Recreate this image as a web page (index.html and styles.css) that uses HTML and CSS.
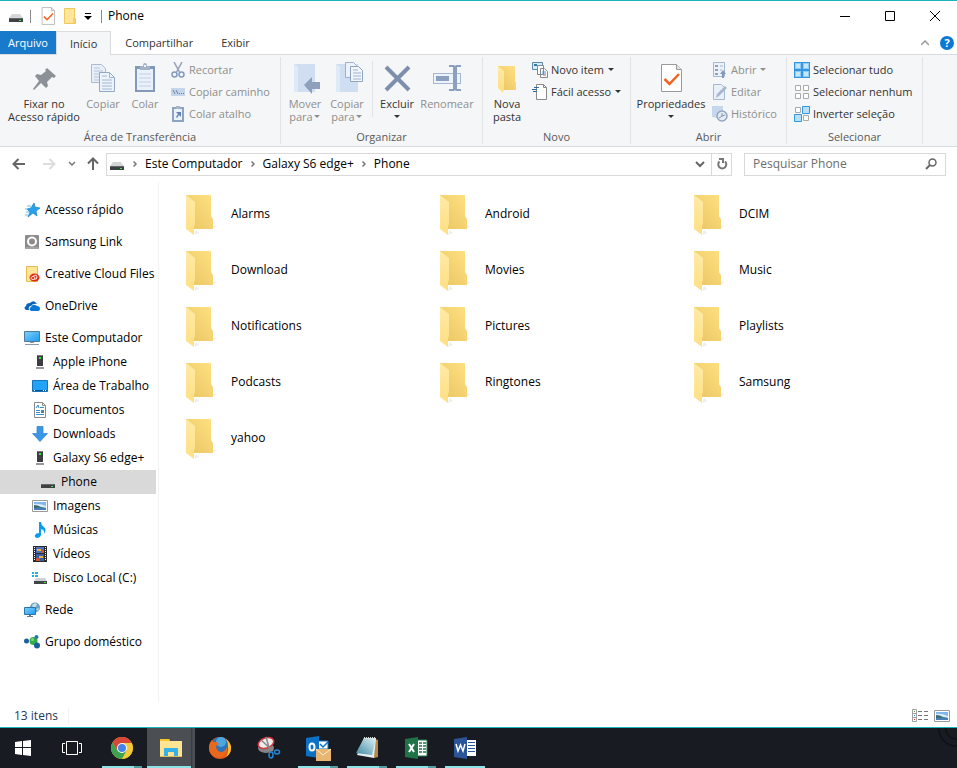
FILE: index.html
```html
<!DOCTYPE html>
<html lang="pt-BR">
<head>
    <meta charset="UTF-8">
    <meta name="viewport" content="width=device-width, initial-scale=1.0">
    <title>Phone</title>
    <link rel="stylesheet" href="styles.css">
</head>
<body>
    <!-- shared icons -->
    <svg class="defs" width="0" height="0">
        <defs>
            <linearGradient id="folder-back" x1="0" y1="1" x2="1" y2="0">
                <stop offset="0" stop-color="#e9c562"/>
                <stop offset="1" stop-color="#ffe082"/>
            </linearGradient>
            <linearGradient id="folder-front" x1="0" y1="0" x2="0" y2="1">
                <stop offset="0" stop-color="#ffeaa6"/>
                <stop offset="1" stop-color="#ffdf83"/>
            </linearGradient>
            <linearGradient id="screen" x1="0" y1="0" x2="1" y2="1">
                <stop offset="0" stop-color="#7fd0fb"/>
                <stop offset="1" stop-color="#1c9af0"/>
            </linearGradient>
            <linearGradient id="glass" x1="0" y1="1" x2="1" y2="0">
                <stop offset="0" stop-color="#3b8aa0"/>
                <stop offset="1" stop-color="#e2f2f5"/>
            </linearGradient>
            <symbol id="folder" viewBox="0 0 48 48">
                <path d="M18 45l5-2-3-3zM34 39l6-2-3-2z" fill="#eeeeee"/>
                <path d="M10 5h25v21l2 3v10H18L10 10z" fill="url(#folder-back)"/>
                <path d="M10 5l9 7v22l-1 2v9l-8-6z" fill="url(#folder-front)"/>
            </symbol>
            <symbol id="drive" viewBox="0 0 16 16">
                <path d="M4 6h8l3 4H1z" fill="#d4d6d8"/>
                <path d="M1 10h14v4H1z" fill="#3d4144"/>
                <path d="M1 10h14v1H1z" fill="#63686b"/>
                <path d="M11 12h2v1h-2z" fill="#3cea3c"/>
            </symbol>
            <symbol id="tower" viewBox="0 0 16 16">
                <path d="M5 1h6v11H5z" fill="#3b3d40"/>
                <path d="M5 1h6v1H5z" fill="#777"/>
                <path d="M7 3h2v2H7z" fill="#35e835"/>
                <path d="M4 13h8v2H4z" fill="#97999b"/>
            </symbol>
            <symbol id="check-doc" viewBox="0 0 32 32">
                <path d="M6.500 2.500h15l5 5v22h-20z" fill="#fff" stroke="#9a9a9a"/>
                <path d="M21.500 2.500v5h5" fill="#e4e4e4" stroke="#9a9a9a"/>
                <path d="M9.500 17l5 5L24 12" fill="none" stroke="#f4631e" stroke-width="2.500"/>
            </symbol>
            <symbol id="picture" viewBox="0 0 16 16">
                <path d="M.5 2.500h15v11H.5z" fill="#fff" stroke="#9a9a9a"/>
                <path d="M2 4h12v8H2z" fill="#7fb6ee"/>
                <path d="M2 6q5-1 12 2v2H2z" fill="#d8ecf8"/>
                <path d="M2 7q4 0 7 2l5 1v2H2z" fill="#386a70"/>
                <path d="M2 10q6-1 12 0v2H2z" fill="#477eb3"/>
            </symbol>
            <symbol id="arrow-down" viewBox="0 0 8 8">
                <path d="M1 2h6L4 5z" fill="currentColor"/>
            </symbol>
            <symbol id="chevron" viewBox="0 0 8 8">
                <path d="M2.500 1.500L5 4 2.500 6.500" fill="none" stroke="#777" stroke-width="1.500"/>
            </symbol>
        </defs>
    </svg>

    <header class="title-bar">
        <svg class="icon-16"><use href="#drive"/></svg>
        <span class="title-sep"></span>
        <button class="quick-button" aria-label="Propriedades">
            <svg width="20" height="20"><use href="#check-doc"/></svg>
        </button>
        <button class="quick-button" aria-label="Nova pasta">
            <svg width="16" height="16" viewBox="0 0 16 16"><path d="M2.500.5h10v9l1 1v5h-11z" fill="#ffe69a" stroke="#f0c95a"/><path d="M12 10v5" stroke="#e9bd45"/></svg>
        </button>
        <button class="quick-button quick-more" aria-label="Personalizar">
            <svg width="8" height="8" viewBox="0 0 8 8"><path d="M1 1h6v1H1zM0 4h8L4 8z" fill="#000"/></svg>
        </button>
        <span class="title-sep"></span>
        <h1>Phone</h1>
        <div class="window-controls">
            <button aria-label="Minimizar"><svg width="10" height="10" viewBox="0 0 10 10"><path d="M0 5.500h10" stroke="#000"/></svg></button>
            <button aria-label="Maximizar"><svg width="10" height="10" viewBox="0 0 10 10"><path d="M.5.5h9v9h-9z" fill="none" stroke="#000"/></svg></button>
            <button aria-label="Fechar"><svg width="10" height="10" viewBox="0 0 10 10"><path d="M0 0l10 10M10 0L0 10" stroke="#000"/></svg></button>
        </div>
    </header>

    <nav class="tabs">
        <button class="tab tab-file">Arquivo</button>
        <button class="tab tab-active">Início</button>
        <button class="tab">Compartilhar</button>
        <button class="tab">Exibir</button>
        <div class="tabs-right">
            <button aria-label="Recolher"><svg width="8" height="6" viewBox="0 0 8 6"><path d="M0 5l4-4 4 4" fill="none" stroke="#999" stroke-width="1.500"/></svg></button>
            <button class="help-button" aria-label="Ajuda">?</button>
        </div>
    </nav>

    <section class="ribbon">
        <div class="group group-clipboard">
            <div class="group-tools">
                <button class="tool tool-pin">
                    <svg class="icon-32" viewBox="0 0 32 32"><path d="M19 6l9 8-2 2-2-1-5 5 1 4-2 2-5-5-7 7-1-1 6-8-4-5 2-2 4 1 5-4-1-1z" fill="#8b9197"/></svg>
                    <span>Fixar no<br>Acesso rápido</span>
                </button>
                <button class="tool tool-copy" disabled>
                    <svg class="icon-32" viewBox="0 0 32 32"><path d="M4.500 2.500h10l4 4v14h-14z" fill="#e8eff8" stroke="#a9bbd4"/><path d="M7 6h6M7 9h9M7 12h9M7 15h9M7 18h9" stroke="#b5c5da"/><path d="M12.500 10.500h10l5 5v14h-15z" fill="#edf3fa" stroke="#92a8c6"/><path d="M22.500 10.500v5h5M15 14h5M15 18h10M15 21h10M15 24h10M15 27h10" fill="none" stroke="#a4b7d0"/></svg>
                    <span>Copiar</span>
                </button>
                <button class="tool tool-copy" disabled>
                    <svg class="icon-32" viewBox="0 0 32 32"><path d="M6 4h20v26H6z" fill="#8499ba"/><path d="M8 7h16v21H8z" fill="#e9f1fa"/><path d="M10 12h12M10 16h12M10 20h12M10 24h12" stroke="#c1d0e3"/><path d="M11 4h3q0-3 2-3t2 3h3v4H11z" fill="#a4b2c6"/><path d="M15 3h2v2h-2z" fill="#f0f4fa"/></svg>
                    <span>Colar</span>
                </button>
                <div class="tool-list">
                    <button disabled><svg class="icon-16" viewBox="0 0 16 16"><path d="M4 0l6 11M12 0L6 11" stroke="#91a0b6" stroke-width="1.500"/><circle cx="4.500" cy="12.500" r="2.500" fill="none" stroke="#829bbe" stroke-width="1.500"/><circle cx="11.500" cy="12.500" r="2.500" fill="none" stroke="#829bbe" stroke-width="1.500"/></svg>Recortar</button>
                    <button disabled><svg class="icon-16" viewBox="0 0 16 16"><path d="M1 4h14v8H1z" fill="#c5d6eb"/><path d="M3 6l2 4M6 6l2 4M9 9.500h1M11 9.500h1M13 9.500h1" stroke="#6b82a7"/></svg>Copiar caminho</button>
                    <button disabled><svg class="icon-16" viewBox="0 0 16 16"><path d="M2 1h12v15H2z" fill="#8da3c3"/><path d="M4 3h8v11H4z" fill="#e9f1fa"/><path d="M6 0h4v3H6z" fill="#a8b4c6"/><path d="M6 6h5v5l-2-2-2 3-1-1 2-3z" fill="#6482b4"/></svg>Colar atalho</button>
                </div>
            </div>
            <div class="group-name">Área de Transferência</div>
        </div>

        <div class="group group-organize">
            <div class="group-tools">
                <button class="tool tool-copy" disabled>
                    <svg class="icon-32" viewBox="0 0 32 32"><path d="M5 2h21v28H5z" fill="#cfdff1"/><path d="M5 2l4 3v25H5z" fill="#dfeaf7"/><path d="M15 23l8-8v5h8v7h-8v5z" fill="#8ea0bc"/></svg>
                    <span>Mover<br>para<svg class="icon-8"><use href="#arrow-down"/></svg></span>
                </button>
                <button class="tool tool-copy" disabled>
                    <svg class="icon-32" viewBox="0 0 32 32"><path d="M5 2h22v28H5z" fill="#cfdff1"/><path d="M5 2l4 3v25H5z" fill="#dfeaf7"/><path d="M14.500.5h8l3 3v12h-11z" fill="#edf3fb" stroke="#9db1cc"/><path d="M19.500 4.500h8l4 4v11h-12z" fill="#f2f6fc" stroke="#8fa5c4"/><path d="M22 8h5M22 11h8M22 14h8M22 17h8" stroke="#9fb3cf"/></svg>
                    <span>Copiar<br>para<svg class="icon-8"><use href="#arrow-down"/></svg></span>
                </button>
                <span class="tool-sep"></span>
                <button class="tool tool-copy">
                    <svg class="icon-32" viewBox="0 0 32 32"><path d="M5 5l23 23M28 5L5 28" stroke="#7d8fad" stroke-width="4"/></svg>
                    <span>Excluir<br><svg class="icon-8"><use href="#arrow-down"/></svg></span>
                </button>
                <button class="tool tool-rename" disabled>
                    <svg class="icon-32" viewBox="0 0 32 32"><path d="M2 11h28v11H2z" fill="#a7b7cf"/><path d="M3 12h26v9H3z" fill="#edf3fb"/><path d="M5 14h13v5H5z" fill="#8ba0c0"/><path d="M18 3h5l1 1 1-1h5v2h-4v22h4v2h-5l-1-1-1 1h-5v-2h4V5h-4z" fill="#8b9fbe"/></svg>
                    <span>Renomear</span>
                </button>
            </div>
            <div class="group-name">Organizar</div>
        </div>

        <div class="group group-new">
            <div class="group-tools">
                <button class="tool tool-copy">
                    <svg class="icon-32" viewBox="0 0 32 32"><path d="M7 4h17v15l1 2v7H12z" fill="url(#folder-back)"/><path d="M7 4l6 5v17l-1 5-5-5z" fill="url(#folder-front)"/></svg>
                    <span>Nova<br>pasta</span>
                </button>
                <div class="tool-list">
                    <button><svg class="icon-16" viewBox="0 0 16 16"><path d="M.5.500h10v7H.5z" fill="#d8ecfa" stroke="#5b88a8"/><path d="M2 2h3v2H2z" fill="#3478a8"/><path d="M5.500 3.500h6v9h-6zM8.500 6.500h4l3 3v6h-7z" fill="#fff" stroke="#888"/><path d="M10 10h4M10 12h4" stroke="#4f94cd"/><path d="M11 13h3" stroke="#e07b6b"/></svg>Novo item<svg class="icon-8"><use href="#arrow-down"/></svg></button>
                    <button><svg class="icon-16" viewBox="0 0 16 16"><path d="M4.500.5h7l3 3v12h-10z" fill="#fff" stroke="#8a8a8a"/><path d="M11.500.5v3h3" fill="none" stroke="#8a8a8a"/><path d="M2 3.500h5M0 5.500h5M1 7.500h4" stroke="#2c6ca4"/></svg>Fácil acesso<svg class="icon-8"><use href="#arrow-down"/></svg></button>
                </div>
            </div>
            <div class="group-name">Novo</div>
        </div>

        <div class="group group-open">
            <div class="group-tools">
                <button class="tool tool-props">
                    <svg class="icon-32"><use href="#check-doc"/></svg>
                    <span>Propriedades<br><svg class="icon-8"><use href="#arrow-down"/></svg></span>
                </button>
                <div class="tool-list">
                    <button disabled><svg class="icon-16" viewBox="0 0 16 16"><path d="M1.500.5h11v14h-11z" fill="#edf2f9" stroke="#a5b8d2"/><path d="M3 3h3v2H3zM3 7h3v2H3zM3 11h3v2H3z" fill="#8ca2c2"/><path d="M8 4h3M8 8h2" stroke="#a5b8d2"/><path d="M10 16v-4H8l3-4 3 4h-2v4z" fill="#8499b9"/></svg>Abrir<svg class="icon-8"><use href="#arrow-down"/></svg></button>
                    <button disabled><svg class="icon-16" viewBox="0 0 16 16"><path d="M1.500.5h8l3 3v12h-11z" fill="#e8f0f9" stroke="#a5b8d2"/><path d="M4 14l1-4 8-8 2 2-8 8z" fill="#a5b6ce"/></svg>Editar</button>
                    <button disabled><svg class="icon-16" viewBox="0 0 16 16"><path d="M0 0h11v13L0 11z" fill="#c6d7ec"/><circle cx="10" cy="10" r="5" fill="#e4ebf4" stroke="#93a6c0" stroke-width="1.500"/><path d="M10 7v3l3-1M7 12l3-2" fill="none" stroke="#8294ae"/></svg>Histórico</button>
                </div>
            </div>
            <div class="group-name">Abrir</div>
        </div>

        <div class="group group-select">
            <div class="group-tools">
                <div class="tool-list">
                    <button><svg class="icon-16" viewBox="0 0 16 16"><path d="M0 0h16v16H0z" fill="#3496e0"/><path d="M1 1h6v6H1zM9 1h6v6H9zM1 9h6v6H1zM9 9h6v6H9z" fill="#8fcbf7"/><path d="M2 2h4v4H2zM10 2h4v4h-4zM2 10h4v4H2zM10 10h4v4h-4z" fill="#c6e6fc"/></svg>Selecionar tudo</button>
                    <button><svg class="icon-16" viewBox="0 0 16 16"><path d="M1.500 1.500h5v5h-5zM9.500 1.500h5v5h-5zM1.500 9.500h5v5h-5zM9.500 9.500h5v5h-5z" fill="#fff" stroke="#aaa"/></svg>Selecionar nenhum</button>
                    <button><svg class="icon-16" viewBox="0 0 16 16"><path d="M1.500 1.500h5v5h-5zM9.500 9.500h5v5h-5z" fill="#fff" stroke="#aaa"/><path d="M8.500.5h7v7h-7zM.5 8.500h7v7h-7z" fill="#b6e0fd" stroke="#3496e0"/></svg>Inverter seleção</button>
                </div>
            </div>
            <div class="group-name">Selecionar</div>
        </div>
    </section>

    <div class="address-row">
        <button class="nav-button" aria-label="Voltar"><svg width="14" height="12" viewBox="0 0 14 12"><path d="M13 6H2M6.500 1L1.500 6l5 5" fill="none" stroke="#666" stroke-width="2"/></svg></button>
        <button class="nav-button" aria-label="Avançar" disabled><svg width="14" height="12" viewBox="0 0 14 12"><path d="M1 6h11M7.500 1l5 5-5 5" fill="none" stroke="#ddd" stroke-width="2"/></svg></button>
        <button class="nav-button nav-small" aria-label="Locais recentes"><svg width="8" height="6" viewBox="0 0 8 6"><path d="M1 1l3 3 3-3" fill="none" stroke="#777" stroke-width="1.500"/></svg></button>
        <button class="nav-button nav-up" aria-label="Acima"><svg width="12" height="14" viewBox="0 0 12 14"><path d="M6 13V2M1 6.500l5-5 5 5" fill="none" stroke="#666" stroke-width="2"/></svg></button>
        <div class="address-bar">
            <svg class="icon-16"><use href="#drive"/></svg>
            <svg class="icon-8"><use href="#chevron"/></svg>
            <a href="#">Este Computador</a>
            <svg class="icon-8"><use href="#chevron"/></svg>
            <a href="#">Galaxy S6 edge+</a>
            <svg class="icon-8"><use href="#chevron"/></svg>
            <a href="#">Phone</a>
            <button class="address-drop" aria-label="Locais anteriores"><svg width="10" height="7" viewBox="0 0 10 7"><path d="M1 1l4 4 4-4" fill="none" stroke="#666" stroke-width="2"/></svg></button>
            <button class="address-refresh" aria-label="Atualizar"><svg width="12" height="12" viewBox="0 0 12 12"><path d="M9 3.500a4 4 0 1 1-5.500 0" fill="none" stroke="#777" stroke-width="2"/><path d="M3 0h5v5H6V2H3z" fill="#777"/></svg></button>
        </div>
        <form class="search">
            <input type="text" placeholder="Pesquisar Phone" aria-label="Pesquisar Phone">
            <button type="button" aria-label="Pesquisar"><svg width="12" height="12" viewBox="0 0 12 12"><circle cx="7.500" cy="4.500" r="3.500" fill="none" stroke="#666" stroke-width="1.500"/><path d="M5 7l-4 4" stroke="#666" stroke-width="2"/></svg></button>
        </form>
    </div>

    <div class="content">
        <aside class="sidebar">
            <a class="root" href="#"><svg class="icon-16" viewBox="0 0 16 16"><path d="M10 1l1 4 5 1-4 3 1 5-4-3-5 4 2-5-3-3 4-1z" fill="#29a1ec" stroke="#1580c8" stroke-width=".7"/><path d="M3 4h4M1 7h3M2 10h3M1 13h3" stroke="#67bdf0"/></svg>Acesso rápido</a>
            <a class="root" href="#"><svg class="icon-16" viewBox="0 0 16 16"><rect x="1" y="1" width="14" height="14" rx="1" fill="#8c8c8c"/><circle cx="8" cy="7.500" r="4" fill="#8c8c8c" stroke="#fff" stroke-width="2"/><path d="M2 14h12" stroke="#bbb"/></svg>Samsung Link</a>
            <a class="root" href="#"><svg class="icon-16" viewBox="0 0 16 16"><path d="M2.500.5h11v15h-11z" fill="#ffe596" stroke="#e8bd4f"/><ellipse cx="10.500" cy="11.500" rx="5" ry="4" fill="#dc2a16"/><ellipse cx="9" cy="12" rx="2" ry="1.500" fill="none" stroke="#ffe6d8"/><path d="M9 10q4-2 4 1t-3 2" fill="none" stroke="#ffe6d8"/></svg>Creative Cloud Files</a>
            <a class="root" href="#"><svg class="icon-16" viewBox="0 0 16 16"><path d="M5 12H2q-3-2 0-4 0-3 4-3 4-4 7 1-4-1-6 2-3 0-2 4z" fill="#0a64b8"/><path d="M7 13q-3-2 0-4 2-4 6-1 3 0 3 3 0 2-2 2z" fill="#0a78d4"/></svg>OneDrive</a>
            <a class="root" href="#"><svg class="icon-16" viewBox="0 0 16 16"><path d="M.5 1.500h15v10H.5z" fill="url(#screen)" stroke="#4f7b9b"/><path d="M6 12h4v1H6z" fill="#999"/><path d="M1 14h14v1H1z" fill="#8c9aa8"/></svg>Este Computador</a>
            <a class="child" href="#"><svg class="icon-16"><use href="#tower"/></svg>Apple iPhone</a>
            <a class="child" href="#"><svg class="icon-16" viewBox="0 0 16 16"><path d="M.5 2.500h15v11H.5z" fill="#21a3f7" stroke="#1674bd"/><path d="M1 12h14v1H1z" fill="#0d5487"/><path d="M2 12h1v1H2zM11 12h1v1h-1zM13 12h1v1h-1z" fill="#fff"/></svg>Área de Trabalho</a>
            <a class="child" href="#"><svg class="icon-16" viewBox="0 0 16 16"><path d="M2.500.5h8l3 3v12h-11z" fill="#fff" stroke="#8a8a8a"/><path d="M10.500.5v3h3" fill="none" stroke="#8a8a8a"/><path d="M4 6l2-3 1 3M8 5.500h4M4 8.500h4M9 8.500h3M4 10.500h4M4 12.500h8" fill="none" stroke="#3a8fce"/><path d="M9 9h3v2H9z" fill="#597e8c"/></svg>Documentos</a>
            <a class="child" href="#"><svg class="icon-16" viewBox="0 0 16 16"><path d="M5 .5h6v7h4.500L8 15.500.5 7.500H5z" fill="#3a97e6" stroke="#2b80cc" stroke-width=".7"/></svg>Downloads</a>
            <a class="child" href="#"><svg class="icon-16"><use href="#tower"/></svg>Galaxy S6 edge+</a>
            <a class="grandchild selected" href="#"><svg class="icon-16"><use href="#drive"/></svg>Phone</a>
            <a class="child" href="#"><svg class="icon-16"><use href="#picture"/></svg>Imagens</a>
            <a class="child" href="#"><svg class="icon-16" viewBox="0 0 16 16"><path d="M7 0h2q0 3 3 5 3 3 0 7 1-4-3-5v6q-1 3-4 3-3-1-2-3 1-2 4-2z" fill="#0a9bf2"/></svg>Músicas</a>
            <a class="child" href="#"><svg class="icon-16" viewBox="0 0 16 16"><path d="M1 0h14v16H1z" fill="#2a2a2a"/><path d="M4 1h8v6H4z" fill="#506fc0"/><path d="M4 8h8v7H4z" fill="#3b5da5"/><path d="M5 3h4v2H5zM7 10h4v2H7z" fill="#eab63a"/><path d="M9 4h3v3H9zM4 12h4v3H4z" fill="#c4543a"/><path d="M2.500 1v14M13.500 1v14" stroke="#fff" stroke-dasharray="1 1"/></svg>Vídeos</a>
            <a class="child" href="#"><svg class="icon-16" viewBox="0 0 16 16"><path d="M0 2h2v2H0zM3 2h3v2H3zM0 5h2v2H0zM3 5h3v2H3z" fill="#19b3ea"/><path d="M4 8h9l2 3H2z" fill="#cfd2d4"/><path d="M2 11h13v3H2z" fill="#404447"/><path d="M12 12h2v1h-2z" fill="#3cea3c"/></svg>Disco Local (C:)</a>
            <a class="root" href="#"><svg class="icon-16" viewBox="0 0 16 16"><circle cx="11" cy="5.500" r="5" fill="#6d9fc0"/><path d="M8 3q3-3 5-1l-1 3-3 1zM12 7l3-1-1 3z" fill="#c4dde9"/><path d="M.5 5.500h11v7H.5z" fill="url(#screen)" stroke="#2a78aa"/><path d="M5 13h2v1H5zM3 14h6v1H3z" fill="#687a87"/></svg>Rede</a>
            <a class="root" href="#"><svg class="icon-16" viewBox="0 0 16 16"><circle cx="9.500" cy="7" r="4" fill="#35ad45"/><circle cx="8.500" cy="5.500" r="1.500" fill="#7cd484"/><circle cx="2.500" cy="7" r="2.500" fill="#1b5f9e"/><circle cx="12.500" cy="3" r="2" fill="#2875b4"/><circle cx="13" cy="11.500" r="3" fill="#1c5c9c"/></svg>Grupo doméstico</a>
        </aside>

        <main class="files">
            <a href="#"><svg class="icon-48"><use href="#folder"/></svg>Alarms</a>
            <a href="#"><svg class="icon-48"><use href="#folder"/></svg>Android</a>
            <a href="#"><svg class="icon-48"><use href="#folder"/></svg>DCIM</a>
            <a href="#"><svg class="icon-48"><use href="#folder"/></svg>Download</a>
            <a href="#"><svg class="icon-48"><use href="#folder"/></svg>Movies</a>
            <a href="#"><svg class="icon-48"><use href="#folder"/></svg>Music</a>
            <a href="#"><svg class="icon-48"><use href="#folder"/></svg>Notifications</a>
            <a href="#"><svg class="icon-48"><use href="#folder"/></svg>Pictures</a>
            <a href="#"><svg class="icon-48"><use href="#folder"/></svg>Playlists</a>
            <a href="#"><svg class="icon-48"><use href="#folder"/></svg>Podcasts</a>
            <a href="#"><svg class="icon-48"><use href="#folder"/></svg>Ringtones</a>
            <a href="#"><svg class="icon-48"><use href="#folder"/></svg>Samsung</a>
            <a href="#"><svg class="icon-48"><use href="#folder"/></svg>yahoo</a>
        </main>
    </div>

    <footer class="status-bar">
        <span class="status-count">13 itens</span>
        <button aria-label="Detalhes"><svg width="16" height="14" viewBox="0 0 16 14"><path d="M.5.500h4v12h-4zM.5 4.500h4M.5 8.500h4" fill="#fff" stroke="#a0a0a0"/><path d="M6 2.500h4M12 2.500h4M6 6.500h4M12 6.500h4M6 10.500h4M12 10.500h4" stroke="#777"/><path d="M2 2h1v1H2z" fill="#3a9e4c"/><path d="M2 6h1v1H2z" fill="#3c76d8"/><path d="M2 10h1v1H2z" fill="#d33"/></svg></button>
        <button aria-label="Ícones grandes"><svg width="16" height="16"><use href="#picture"/></svg></button>
    </footer>

    <nav class="taskbar">
        <button class="task task-start" aria-label="Iniciar"><svg width="16" height="16" viewBox="0 0 16 16"><path d="M0 2l7-1v6H0zM8 1l8-1v7H8zM0 8h7v7l-7-1zM8 8h8v8l-8-1z" fill="#fff"/></svg></button>
        <button class="task task-view" aria-label="Visão de tarefas"><svg width="20" height="14" viewBox="0 0 20 14"><path d="M4.500.5h11v13h-11zM3 2.500H.5v9H3M17 2.500h2.500v9H17" fill="none" stroke="#fff"/></svg></button>
        <button class="task open" aria-label="Chrome"><svg class="icon-24" viewBox="0 0 24 24"><circle cx="12" cy="12" r="11" fill="#e7b91d"/><path d="M2.500 6.500a11 11 0 0 1 19 0L22 8H12l-5 6z" fill="#d9473a"/><path d="M2.500 6.500A11 11 0 0 0 12 23l5-9-5 3-5-3z" fill="#3da350"/><path d="M12 7h9.700A11 11 0 0 1 12 23l5-9z" fill="#f2cb3b"/><circle cx="12" cy="12" r="5" fill="#fff"/><circle cx="12" cy="12" r="4" fill="#4583ec"/></svg></button>
        <button class="task active" aria-label="Explorador de Arquivos"><svg class="icon-24" viewBox="0 0 24 24"><path d="M1 3h9l1 2h12v16H1z" fill="#ffe494"/><path d="M1 3h9l1 2H1z" fill="#f5c629"/><path d="M5 12h14v9h-4v-5H9v5H5z" fill="#35b2e8"/><path d="M1 20h22v1H1z" fill="#e0bc60"/></svg></button>
        <button class="task" aria-label="Firefox"><svg class="icon-24" viewBox="0 0 24 24"><circle cx="12" cy="12" r="11" fill="#e05a1c"/><circle cx="12" cy="10" r="9" fill="#2c73ba"/><circle cx="13" cy="6" r="5" fill="#4ba7df"/><path d="M1 12q0-5 3-8l1 2q3-1 6 2l-3 2q0 5 5 6 4 0 6-5 1 5-2 8-6 5-13 0-3-3-3-7z" fill="#e8681c"/><path d="M18 3q5 4 5 9 0 6-5 9 3-5 2-10 0-5-2-8z" fill="#fbc331"/></svg></button>
        <button class="task" aria-label="Ferramenta de Captura"><svg class="icon-24" viewBox="0 0 24 24"><ellipse cx="9" cy="12" rx="8" ry="5" fill="#858585"/><ellipse cx="9" cy="7" rx="8" ry="5" fill="#eee" stroke="#d9343b" stroke-width="1.500" transform="rotate(-20 9 7)"/><path d="M4 4l12 11M9 1l4 14" stroke="#888" stroke-width="1.500"/><ellipse cx="14" cy="19" rx="2" ry="3" fill="none" stroke="#2688d4" stroke-width="1.500"/><ellipse cx="20" cy="16" rx="2.500" ry="2" fill="none" stroke="#2688d4" stroke-width="1.500"/></svg></button>
        <button class="task open" aria-label="Outlook"><svg class="icon-26" viewBox="0 0 26 26"><path d="M13 6h10v8H13z" fill="#fff" stroke="#0b72c6" stroke-width="1"/><path d="M15 9l3 3 5-5" fill="none" stroke="#0b72c6" stroke-width="1.500"/><path d="M1 3l13-2v22L1 21z" fill="#0b72c6"/><ellipse cx="7" cy="12" rx="2.500" ry="3.500" fill="none" stroke="#fff" stroke-width="2"/><path d="M11 14h15v12H11z" fill="#e9b672"/><path d="M11 14l7 6 8-6" fill="none" stroke="#fff0d7"/></svg></button>
        <button class="task open" aria-label="Bloco de notas"><svg class="icon-24" viewBox="0 0 24 24"><path d="M20 3l3 1v17l-4 1z" fill="#b88a46"/><path d="M9 2h12l-2 20-17-3z" fill="#e6eef0"/><path d="M9 2h12l-4 17-16-2z" fill="url(#glass)"/><path d="M9 2h11" stroke="#ddd" stroke-width="2" stroke-dasharray="1 1"/></svg></button>
        <button class="task open" aria-label="Excel"><svg class="icon-24" viewBox="0 0 24 24"><path d="M13 4h10v16H13z" fill="#fff" stroke="#207346"/><path d="M15 7h3M19 7h3M15 10h3M19 10h3M15 13h3M19 13h3M15 16h3M19 16h3" stroke="#207346" stroke-width="1.500"/><path d="M1 3l13-2v22L1 21z" fill="#207346"/><path d="M5 8l5 8M10 8l-5 8" stroke="#fff" stroke-width="2"/></svg></button>
        <button class="task open single" aria-label="Word"><svg class="icon-24" viewBox="0 0 24 24"><path d="M13 4h10v16H13z" fill="#fff"/><path d="M15 6.500h7M15 9.500h7M15 12.500h7M15 15.500h7" stroke="#2a5699"/><path d="M1 3l13-2v22L1 21z" fill="#2a5699"/><path d="M3 8l2 7 2.500-6L10 15l2-7" fill="none" stroke="#fff" stroke-width="1.500"/></svg></button>
    </nav>
</body>
</html>
```
FILE: styles.css
```css
* {
    box-sizing: border-box;
}
body {
    display: flex;
    flex-direction: column;
    min-height: 100vh;
    margin: 0;
    font-family: "Open Sans", "Noto Sans", sans-serif;
    font-size: 12px;
    line-height: 16px;
    color: #000;
    background-color: #fff;
    border-top: 1px solid #18b5bf;
}
button {
    display: flex;
    align-items: center;
    justify-content: center;
    padding: 0;
    border: none;
    background: none;
    color: inherit;
    font: inherit;
}
a {
    color: inherit;
    text-decoration: none;
}
svg {
    flex-shrink: 0;
}
.defs {
    position: absolute;
}
.icon-8 {
    width: 8px;
    height: 8px;
}
.icon-16 {
    width: 16px;
    height: 16px;
}
.icon-24 {
    width: 24px;
    height: 24px;
}
.icon-26 {
    width: 26px;
    height: 26px;
}
.icon-32 {
    width: 32px;
    height: 32px;
}
.icon-48 {
    width: 48px;
    height: 48px;
}

/* title bar */
.title-bar {
    display: flex;
    align-items: center;
    height: 30px;
    padding-left: 8px;
}
.title-bar h1 {
    margin: 0;
    font-size: 12px;
    font-weight: normal;
}
.title-sep {
    width: 1px;
    height: 13px;
    margin: 0 6px;
    background-color: #8a8a8a;
}
.quick-button {
    width: 22px;
    height: 22px;
}
.quick-more {
    width: 14px;
}
.window-controls {
    display: flex;
    margin-left: auto;
}
.window-controls button {
    width: 45px;
    height: 28px;
}

/* tabs */
.tabs {
    display: flex;
    height: 24px;
    border-bottom: 1px solid #dadbdc;
    color: #333;
    font-size: 11px;
}
.tab {
    height: 23px;
    padding: 0 14px;
}
.tab-file {
    width: 56px;
    padding: 0;
    background-color: #1979ca;
    color: #fff;
}
.tab-active {
    height: 24px;
    padding: 0 13px;
    border: 1px solid #dadbdc;
    border-bottom: none;
    background-color: #f5f6f7;
}
.tabs-right {
    display: flex;
    align-items: center;
    gap: 11px;
    margin-left: auto;
    padding-right: 3px;
}
.help-button {
    width: 14px;
    height: 14px;
    border-radius: 50%;
    background-color: #0b78d4;
    color: #fff;
    font-weight: bold;
}

/* ribbon */
.ribbon {
    display: flex;
    height: 92px;
    padding-top: 2px;
    border-bottom: 1px solid #dadbdc;
    background-color: #f5f6f7;
    color: #333;
    font-size: 11px;
}
.group {
    display: flex;
    flex-direction: column;
    height: 87px;
    border-right: 1px solid #e2e3e4;
}
.group-clipboard {
    width: 281px;
}
.group-organize {
    width: 202px;
}
.group-new {
    width: 148px;
}
.group-open {
    width: 156px;
}
.group-select {
    width: 136px;
}
.group-tools {
    display: flex;
    flex: 1;
    padding-left: 3px;
}
.group-clipboard .group-tools {
    padding-left: 0;
}
.group-name {
    height: 14px;
    line-height: 14px;
    text-align: center;
    color: #5a5a5a;
}
.tool {
    flex-direction: column;
    justify-content: flex-start;
    gap: 3px;
    padding-top: 5px;
    line-height: 13px;
    white-space: nowrap;
}
.tool-copy {
    width: 42px;
}
.tool-pin {
    width: 82px;
    padding-left: 6px;
}
.tool-rename {
    width: 58px;
}
.tool-props {
    width: 74px;
}
.tool-sep {
    width: 1px;
    height: 56px;
    margin: 4px 3px 4px 4px;
    background-color: #e2e3e4;
}
.tool-list {
    display: flex;
    flex-direction: column;
    padding: 2px 0 0 4px;
}
.tool-list button {
    justify-content: flex-start;
    gap: 3px;
    height: 22px;
    white-space: nowrap;
}
.ribbon button:disabled {
    color: #8e8e8e;
}

/* address row */
.address-row {
    display: flex;
    align-items: center;
    height: 35px;
    padding: 0 11px 1px 4px;
}
.nav-button {
    width: 30px;
    height: 22px;
}
.nav-small {
    width: 16px;
}
.nav-up {
    width: 26px;
}
.address-bar {
    display: flex;
    flex: 1;
    align-items: center;
    gap: 6px;
    height: 23px;
    padding-left: 2px;
    border: 1px solid #d9d9d9;
}
.address-drop {
    margin-left: auto;
}
.address-refresh {
    width: 20px;
    height: 21px;
    border-left: 1px solid #d9d9d9;
}
.search {
    display: flex;
    width: 202px;
    height: 23px;
    margin-left: 12px;
    border: 1px solid #d9d9d9;
}
.search input {
    flex: 1;
    min-width: 0;
    padding: 0 8px;
    border: none;
    font: inherit;
}
.search input::placeholder {
    color: #6d6d6d;
}
.search button {
    width: 28px;
}

/* content */
.content {
    display: flex;
    flex: 1;
}
.sidebar {
    width: 159px;
    padding: 8px 2px 8px 0;
    border-right: 1px solid #f2f2f2;
}
.sidebar a {
    display: flex;
    align-items: center;
    gap: 5px;
    height: 24px;
    white-space: nowrap;
}
.sidebar .root {
    margin-top: 8px;
    padding-left: 24px;
}
.sidebar .child {
    padding-left: 32px;
}
.sidebar .grandchild {
    padding-left: 40px;
}
.sidebar .selected {
    background-color: #d9d9d9;
}
.files {
    display: grid;
    flex: 1;
    grid-template-columns: repeat(auto-fill, 254px);
    grid-auto-rows: 56px;
    padding: 4px 0 0 17px;
}
.files a {
    display: flex;
    align-items: center;
    gap: 7px;
}

/* status bar */
.status-bar {
    display: flex;
    align-items: center;
    gap: 6px;
    height: 24px;
    padding: 1px 7px 0 14px;
}
.status-count {
    margin-right: auto;
    padding-right: 10px;
    border-right: 1px solid #f2f2f2;
    color: #1e395b;
}

/* taskbar */
.taskbar {
    display: flex;
    gap: 1px;
    height: 41px;
    border-top: 1px solid #18b5bf;
    background: radial-gradient(circle at 100% 0, #181b20 10px, #0d1013 11px, #181c22 13px, #181c22 17px, #0d1013 18px, #181c22 20px);
}
.task {
    width: 48px;
    height: 40px;
}
.task-start {
    width: 46px;
}
.task-view {
    width: 50px;
}
.task.open {
    background: linear-gradient(to right, #8be3e6 32px, #569da3 32px) center bottom / 40px 2px no-repeat;
}
.task.single {
    background: linear-gradient(#8be3e6, #8be3e6) center bottom / 40px 2px no-repeat;
}
.task.active {
    background: linear-gradient(#8be3e6, #8be3e6) left bottom / 44px 2px no-repeat, linear-gradient(to right, #4b4e53 44px, #33363b 44px, #4b4e53 46px);
}
```
